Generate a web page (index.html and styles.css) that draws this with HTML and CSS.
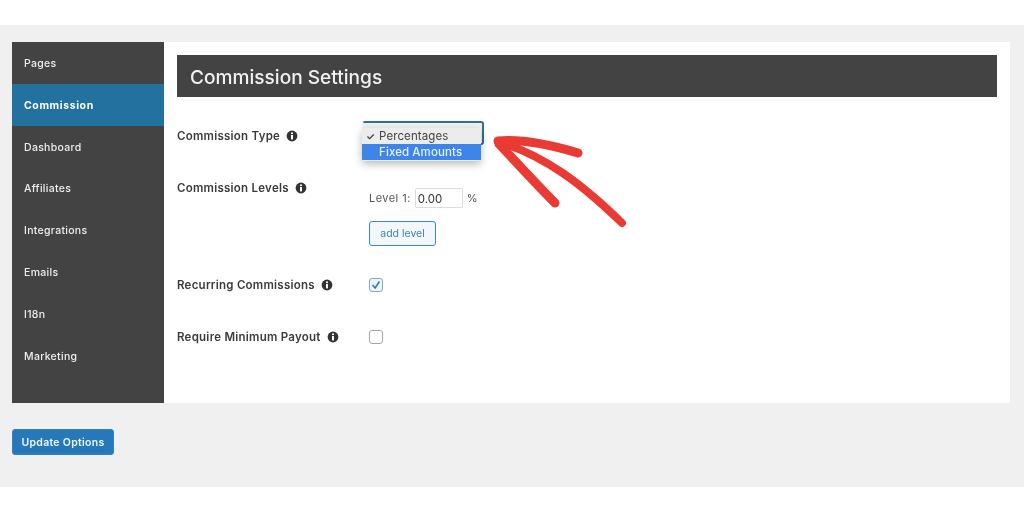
FILE: index.html
```html
<!DOCTYPE html>
<html lang="en">
<head>
<meta charset="utf-8">
<title>Commission Settings</title>
<link rel="stylesheet" href="styles.css">
</head>
<body>
<div class="band">
  <div class="panel">
    <nav class="side">
      <a class="item">Pages</a>
      <a class="item active">Commission</a>
      <a class="item">Dashboard</a>
      <a class="item">Affiliates</a>
      <a class="item">Integrations</a>
      <a class="item">Emails</a>
      <a class="item">I18n</a>
      <a class="item">Marketing</a>
    </nav>
    <main class="content">
      <h1 class="title">Commission Settings</h1>
      <div class="form">
        <div class="row row-type">
          <div class="label">Commission Type <svg class="info" viewBox="0 0 12 12"><circle cx="6" cy="6" r="5.4" fill="#333"/><rect x="5" y="5" width="2" height="4.4" fill="#fff"/><rect x="5" y="2.5" width="2" height="1.6" fill="#fff"/></svg></div>
          <div class="field">
            <div class="select-wrap">
              <div class="select"></div>
              <div class="menu">
                <div class="opt"><span class="check">✓</span>Percentages</div>
                <div class="opt sel">Fixed Amounts</div>
              </div>
            </div>
          </div>
        </div>
        <div class="row row-levels">
          <div class="label">Commission Levels <svg class="info" viewBox="0 0 12 12"><circle cx="6" cy="6" r="5.4" fill="#333"/><rect x="5" y="5" width="2" height="4.4" fill="#fff"/><rect x="5" y="2.5" width="2" height="1.6" fill="#fff"/></svg></div>
          <div class="field levels">
            <div class="level">Level 1: <span class="input">0.00</span> %</div>
            <button class="btn-add">add level</button>
          </div>
        </div>
        <div class="row row-check">
          <div class="label">Recurring Commissions <svg class="info" viewBox="0 0 12 12"><circle cx="6" cy="6" r="5.4" fill="#333"/><rect x="5" y="5" width="2" height="4.4" fill="#fff"/><rect x="5" y="2.5" width="2" height="1.6" fill="#fff"/></svg></div>
          <div class="field"><span class="box checked"><svg viewBox="0 0 14 14"><path d="M3 7 L6 10.5 L11 3" fill="none" stroke="#2c7fb8" stroke-width="1.9"/></svg></span></div>
        </div>
        <div class="row row-check">
          <div class="label">Require Minimum Payout <svg class="info" viewBox="0 0 12 12"><circle cx="6" cy="6" r="5.4" fill="#333"/><rect x="5" y="5" width="2" height="4.4" fill="#fff"/><rect x="5" y="2.5" width="2" height="1.6" fill="#fff"/></svg></div>
          <div class="field"><span class="box"></span></div>
        </div>
      </div>
      <svg class="arrow" viewBox="0 0 140 110"><g fill="none" stroke="#e93a34" stroke-linecap="round" stroke-linejoin="round"><path d="M8 11 C30 9 58 14 88 23" stroke-width="9"/><path d="M9 14 C26 32 46 54 65 73" stroke-width="9"/><path d="M13 13 C55 27 90 52 132 93" stroke-width="8"/></g></svg>
    </main>
  </div>
  <button class="update">Update Options</button>
</div>
</body>
</html>
```
FILE: styles.css
```css
html, body { margin: 0; padding: 0; background: #fff; }
body { height: 512px; overflow: hidden; font-family: Inter, "Liberation Sans", sans-serif; padding-top: 25px; box-sizing: border-box; }
.band { background: #f0f0f1; height: 462px; padding: 17px 14px 0 12px; box-sizing: border-box; filter: blur(0.7px); }
.panel { display: flex; background: #fff; height: 361px; }
.side { width: 152px; background: #434343; flex: none; display: flex; flex-direction: column; }
.item { height: 41.8px; line-height: 43px; padding-left: 12px; font-size: 10.5px; font-weight: 500; color: #eee; letter-spacing: .3px; }
.item.active { background: #22719f; color: #fff; font-weight: 700; letter-spacing: .6px; }
.content { flex: 1; padding: 13px 13px 0; position: relative; }
.title { margin: 0; height: 42px; line-height: 44px; background: #434343; color: #f1f1f1; font-size: 19.1px; font-weight: 500; padding-left: 13px; }
.form { display: flex; flex-direction: column; }
.row { display: flex; }
.label { width: 192px; flex: none; font-size: 11.5px; font-weight: 600; color: #3a3a3a; letter-spacing: .25px; display: flex; align-items: center; gap: 6px; height: 16px; white-space: nowrap; }
.info { width: 12px; height: 12px; }
.row-type { padding-top: 31px; height: 47px; }
.row-levels { padding-top: 5px; height: 97px; }
.row-check { height: 52px; align-items: flex-start; }
.field { font-size: 11px; color: #444; }
.select-wrap { position: relative; width: 122px; height: 24px; margin-top: -7px; margin-left: -7px; }
.select { height: 24px; box-sizing: border-box; width: 122px; border: 2px solid #2f6f9e; border-radius: 3px; background: #f0f1f1; border-left-color: transparent; }
.menu { position: absolute; left: 0; top: 7px; width: 119px; background: #ececec; border-radius: 3px; box-shadow: 0 3px 8px rgba(0,0,0,.28); font-size: 11.5px; line-height: 16px; padding-bottom: 1px; }
.opt { padding-left: 17px; position: relative; color: #444; letter-spacing: .1px; }
.opt.sel { background: #3d85e8; color: #e8f1fd; font-weight: 500; }
.check { position: absolute; left: 4px; font-size: 10px; font-weight: 700; }
.levels { display: flex; flex-direction: column; align-items: flex-start; padding-top: 8px; }
.level { font-size: 11px; color: #555; display: flex; align-items: center; gap: 4px; height: 20px; white-space: nowrap; letter-spacing: .45px; }
.input { display: inline-block; width: 48px; height: 20px; line-height: 20px; box-sizing: border-box; border: 1px solid #dcdcdc; border-radius: 2px; background: #fff; padding-left: 2px; color: #333; font-size: 11.5px; letter-spacing: 0; }
.btn-add { margin-top: 13px; width: 67px; height: 25px; border: 1.5px solid #3a8cc0; border-radius: 3px; background: #f3f7f9; color: #3a85ad; font: 400 10.5px Inter, "Liberation Sans", sans-serif; padding: 0; }
.box { display: block; width: 14px; height: 14px; box-sizing: border-box; border: 1.3px solid #a3a6aa; border-radius: 3px; background: #fff; margin-top: 1px; }
.box.checked { background: #eef4f8; border-color: #8fa6b6; }
.box svg { display: block; width: 12px; height: 12px; }
.arrow { position: absolute; left: 326px; top: 88px; width: 140px; height: 110px; }
.update { display: block; margin-top: 26px; width: 102px; height: 26px; background: #2678b8; border: 1px solid #2f82c4; border-radius: 3px; color: #eef5fa; font: 600 10.5px Inter, "Liberation Sans", sans-serif; letter-spacing: .3px; padding: 0; }
```
